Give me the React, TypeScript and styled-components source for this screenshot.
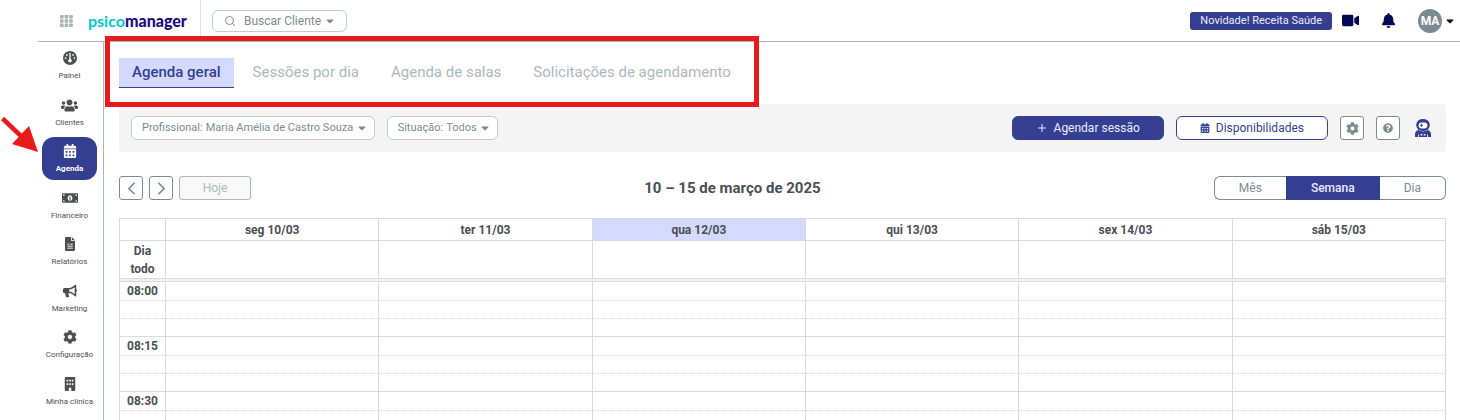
import React from "react";
import styled, { createGlobalStyle, css } from "styled-components";
import {
  FaUsers,
  FaCalendarAlt,
  FaMoneyBillAlt,
  FaBullhorn,
  FaCog,
  FaVideo,
  FaBell,
  FaCaretDown,
  FaQuestionCircle,
} from "react-icons/fa";
import { FaGauge, FaBuilding } from "react-icons/fa6";
import { ChevronLeft, ChevronRight, Plus, Search } from "lucide-react";

const c = {
  primary: "#343f92",
  navy: "#020a52",
  soft: "#d4daff",
  ink: "#4a5052",
  gray: "#7c8b93",
  mute: "#adb8be",
  line: "#d9dadb",
  red: "#e81b1c",
};

const GlobalStyle = createGlobalStyle`
  *, *::before, *::after { box-sizing: border-box; }
  body {
    margin: 0;
    background: #fff;
    color: ${c.ink};
    font-family: Roboto, "Liberation Sans", sans-serif;
    font-size: 12px;
    line-height: 18px;
  }
  button, select { font: inherit; color: inherit; margin: 0; cursor: pointer; }
  a { color: inherit; text-decoration: none; }
  svg { display: block; flex: none; }
`;

const Page = styled.div`
  position: relative;
  display: flex;
  flex-direction: column;
  height: 100vh;
  padding-left: 38px;
  overflow: hidden;
`;

const Header = styled.header`
  display: flex;
  align-items: center;
  flex: none;
  height: 42px;
  border-bottom: 1px solid #a9b5ba;
`;

const PlainButton = styled.button`
  display: flex;
  align-items: center;
  justify-content: center;
  padding: 0;
  border: 0;
  background: none;
`;

const Brand = styled.div`
  display: flex;
  align-items: center;
  align-self: stretch;
  gap: 15px;
  width: 163px;
  padding-left: 22px;
  border-right: 1px solid #dfe3e5;
`;

const Logo = styled.a`
  font-family: Lato, sans-serif;
  font-size: 16px;
  font-weight: 700;
  line-height: 20px;
  color: #00c8d4;
  strong {
    font-weight: 900;
    color: #200a80;
  }
`;

const SelectBox = styled.div`
  display: flex;
  align-items: center;
  height: 24px;
  padding: 0 6px 0 10px;
  border: 1px solid #c4cbce;
  border-radius: 6px;
  background: #fff;
  color: ${c.gray};
  font-size: 11px;
  label {
    padding-right: 3px;
  }
  select {
    appearance: none;
    padding: 0;
    border: 0;
    background: none;
  }
`;

const SearchBox = styled(SelectBox)`
  height: 22px;
  margin-left: 11px;
  padding: 0 10px 0 11px;
  font-size: 12px;
  label {
    padding-right: 8px;
  }
`;

const Caret = styled(FaCaretDown)`
  width: 12px;
  height: 12px;
  margin-left: 2px;
  pointer-events: none;
`;

const HeaderActions = styled.div`
  display: flex;
  align-items: center;
  margin-left: auto;
  padding-right: 4px;
  color: ${c.navy};
`;

const News = styled.button`
  height: 18px;
  margin-right: 10px;
  padding: 0 10px;
  border: 0;
  border-radius: 3px;
  background: ${c.primary};
  color: #e8eaff;
  font-size: 11px;
  line-height: 16px;
`;

const Alerts = styled.div`
  display: flex;
  align-items: center;
  gap: 22px;
`;

const Account = styled(PlainButton)`
  gap: 2px;
  color: #000;
`;

const Avatar = styled.span`
  display: grid;
  place-items: center;
  width: 24px;
  height: 24px;
  border-radius: 50%;
  background: #7c8b93;
  color: #fff;
  font-weight: 700;
  font-size: 12px;
`;

const Body = styled.div`
  display: flex;
  flex: 1;
  min-height: 0;
`;

const Sidebar = styled.nav`
  flex: none;
  width: 66px;
  padding: 2px 0 0 4px;
  border-right: 1px solid #a9b5ba;
`;

const MenuList = styled.ul`
  display: flex;
  flex-direction: column;
  justify-content: space-between;
  height: 369px;
  margin: 0;
  padding: 0;
  list-style: none;
`;

const MenuLink = styled.a<{ $active?: boolean }>`
  display: flex;
  flex-direction: column;
  align-items: center;
  gap: 5px;
  width: 55px;
  height: 43px;
  padding-top: 6px;
  border-radius: 12px;
  font-size: 8px;
  line-height: 10px;
  white-space: nowrap;
  ${(p) =>
    p.$active &&
    css`
      background: ${c.primary};
      color: #fff;
      font-weight: 700;
    `}
`;

const MenuIcon = styled.span`
  display: grid;
  place-items: center;
  height: 16px;
`;

const Main = styled.main`
  flex: 1;
  min-width: 0;
  padding: 16px 14px 0 15px;
`;

const Tabs = styled.nav`
  display: flex;
  gap: 6px;
`;

const Tab = styled.a<{ $active?: boolean }>`
  height: 30px;
  padding: 0 13px;
  border-bottom: 1px solid transparent;
  color: ${c.mute};
  font-size: 15px;
  line-height: 28px;
  ${(p) =>
    p.$active &&
    css`
      border-color: ${c.primary};
      background: ${c.soft};
      color: ${c.primary};
      font-weight: 500;
    `}
`;

const Toolbar = styled.div`
  display: flex;
  align-items: center;
  gap: 12px;
  height: 48px;
  margin-top: 16px;
  padding: 0 12px;
  border-radius: 3px;
  background: #f4f4f4;
`;

const Spacer = styled.span`
  flex: 1;
`;

const Action = styled.button<{ $filled?: boolean }>`
  display: flex;
  align-items: center;
  justify-content: center;
  gap: 6px;
  height: 24px;
  padding: 0 23px;
  border: 1px solid ${c.primary};
  border-radius: 6px;
  background: ${(p) => (p.$filled ? c.primary : "#fff")};
  color: ${(p) => (p.$filled ? "#e8eaff" : c.primary)};
  font-size: 12px;
`;

const SquareButton = styled(PlainButton)`
  width: 24px;
  height: 24px;
  border: 1px solid ${c.gray};
  border-radius: 3px;
  background: #fff;
  color: ${c.gray};
`;

const AssistantButton = styled(PlainButton)`
  width: 22px;
  color: ${c.primary};
`;

const CalendarBar = styled.div`
  display: flex;
  align-items: center;
  justify-content: space-between;
  margin: 24px 0 18px;
`;

const Pager = styled.div`
  display: flex;
  gap: 6px;
`;

const TodayButton = styled.button`
  width: 72px;
  height: 24px;
  border: 1px solid ${c.mute};
  border-radius: 3px;
  background: #f8f8f8;
  color: ${c.mute};
  font-size: 12px;
`;

const Period = styled.h1`
  margin: 0;
  font-size: 15px;
  font-weight: 700;
  line-height: 24px;
`;

const Views = styled.div`
  display: flex;
`;

const ViewButton = styled.button<{ $active?: boolean }>`
  height: 24px;
  padding: 0 24px;
  border: 1px solid ${c.gray};
  background: #fff;
  color: ${c.gray};
  font-size: 12px;
  &:first-child {
    border-radius: 6px 0 0 6px;
    border-right: 0;
  }
  &:last-child {
    border-radius: 0 6px 6px 0;
    border-left: 0;
  }
  ${(p) =>
    p.$active &&
    css`
      border-color: ${c.primary};
      background: ${c.primary};
      color: #e8eaff;
      font-weight: 500;
    `}
`;

const Schedule = styled.table`
  width: 100%;
  border-collapse: collapse;
  table-layout: fixed;
  th,
  td {
    padding: 0;
    border: 1px solid ${c.line};
    font-weight: 700;
    text-align: center;
  }
`;

const TimeCol = styled.col`
  width: 46px;
`;

const DayHead = styled.th<{ $today?: boolean }>`
  height: 22px;
  background: ${(p) => (p.$today ? c.soft : "#fff")};
`;

const AllDayHead = styled.th`
  height: 38px;
  && {
    padding: 0 6px;
  }
`;

const DividerCell = styled.td`
  height: 3px;
  background: #f0f0f0;
`;

const SlotRow = styled.tr<{ $first?: boolean; $last?: boolean }>`
  height: ${(p) => (p.$first ? "19px" : "18px")};
  th {
    line-height: 18px;
  }
  && > * {
    border-top-style: ${(p) => (p.$first ? "solid" : "dotted")};
    border-bottom-style: ${(p) => (p.$last ? "solid" : "dotted")};
  }
`;

const Highlight = styled.div`
  position: absolute;
  top: 36px;
  left: 105px;
  width: 654px;
  height: 71px;
  border: 5px solid ${c.red};
  pointer-events: none;
`;

const Pointer = styled.svg`
  position: absolute;
  top: 114px;
  left: 0;
  pointer-events: none;
`;

const AppsIcon = () => (
  <svg width="13" height="12" viewBox="0 0 13 12" fill="#a9b2b7" aria-hidden="true">
    {[0, 4.3, 8.6].map((y) =>
      [0, 4.6, 9.2].map((x) => <rect key={`${x}-${y}`} x={x} y={y} width="3.6" height="3.4" rx="0.6" />),
    )}
  </svg>
);

const AssistantIcon = () => (
  <svg width="18" height="20" viewBox="0 0 18 20" aria-hidden="true">
    <rect x="2.200" y="1" width="13.600" height="12" rx="6" fill="currentColor" />
    <rect x="4.600" y="4.400" width="8.800" height="6.200" rx="3" fill="#fff" />
    <path d="M6 7.300h3M7.500 5.800v3" stroke="currentColor" strokeWidth="1" />
    <path d="M1 19v-2.500q0-3.500 3-4.500 5 2.800 10 0 3 1 3 4.500V19z" fill="currentColor" />
    <path d="M4.500 16.500V19M13.500 16.500V19" stroke="#fff" strokeWidth="0.800" />
    <path d="M6.600 16.800h1.600M9.800 16.800h1.600" stroke="#fff" strokeWidth="1.600" />
  </svg>
);

const ReportIcon = ({ size }: { size: number }) => (
  <svg width={size} height={size} viewBox="0 0 14 14" aria-hidden="true">
    <path d="M3.200 0H8v3.200c0 .5.400.8.800.8H12v8.800c0 .7-.5 1.200-1.200 1.200H3.200C2.500 14 2 13.500 2 12.800V1.200C2 .5 2.500 0 3.200 0z" fill="currentColor" />
    <path d="M8.800.1 11.900 3.200H8.800z" fill="currentColor" />
    <path d="M4.300 7.200h2M7.200 7.200h2.500M4.300 9.200h5.400M4.300 11.200h5.400" stroke="#fff" strokeWidth="0.900" />
  </svg>
);

const menu = [
  { label: "Painel", Icon: FaGauge, size: 14 },
  { label: "Clientes", Icon: FaUsers, size: 17 },
  { label: "Agenda", Icon: FaCalendarAlt, size: 14, active: true },
  { label: "Financeiro", Icon: FaMoneyBillAlt, size: 16 },
  { label: "Relatórios", Icon: ReportIcon, size: 14 },
  { label: "Marketing", Icon: FaBullhorn, size: 14 },
  { label: "Configuração", Icon: FaCog, size: 14 },
  { label: "Minha clínica", Icon: FaBuilding, size: 14 },
];

const tabs = ["Agenda geral", "Sessões por dia", "Agenda de salas", "Solicitações de agendamento"];
const days = ["seg 10/03", "ter 11/03", "qua 12/03", "qui 13/03", "sex 14/03", "sáb 15/03"];
const today = "qua 12/03";
const hours = ["08:00", "08:15", "08:30"];

export default function App() {
  return (
    <>
      <GlobalStyle />
      <Page>
        <Header>
          <Brand>
            <PlainButton aria-label="Aplicativos">
              <AppsIcon />
            </PlainButton>
            <Logo href="#">
              psico<strong>manager</strong>
            </Logo>
          </Brand>
          <SearchBox>
            <label htmlFor="cliente" aria-label="Cliente">
              <Search size={12} />
            </label>
            <select id="cliente">
              <option>Buscar Cliente</option>
            </select>
            <Caret />
          </SearchBox>
          <HeaderActions>
            <News>Novidade! Receita Saúde</News>
            <Alerts>
              <PlainButton aria-label="Vídeo">
                <FaVideo size={17} />
              </PlainButton>
              <PlainButton aria-label="Notificações">
                <FaBell size={15} />
              </PlainButton>
              <Account aria-label="Conta">
                <Avatar>MA</Avatar>
                <FaCaretDown size={12} />
              </Account>
            </Alerts>
          </HeaderActions>
        </Header>
        <Body>
          <Sidebar>
            <MenuList>
              {menu.map(({ label, Icon, size, active }) => (
                <li key={label}>
                  <MenuLink href="#" $active={active}>
                    <MenuIcon>
                      <Icon size={size} />
                    </MenuIcon>
                    {label}
                  </MenuLink>
                </li>
              ))}
            </MenuList>
          </Sidebar>
          <Main>
            <Tabs>
              {tabs.map((t, i) => (
                <Tab key={t} href="#" $active={i === 0}>
                  {t}
                </Tab>
              ))}
            </Tabs>
            <Toolbar>
              <SelectBox>
                <label htmlFor="profissional">Profissional:</label>
                <select id="profissional">
                  <option>Maria Amélia de Castro Souza</option>
                </select>
                <Caret />
              </SelectBox>
              <SelectBox>
                <label htmlFor="situacao">Situação:</label>
                <select id="situacao">
                  <option>Todos</option>
                </select>
                <Caret />
              </SelectBox>
              <Spacer />
              <Action $filled>
                <Plus size={12} />
                Agendar sessão
              </Action>
              <Action>
                <FaCalendarAlt size={10} />
                Disponibilidades
              </Action>
              <SquareButton aria-label="Configurações">
                <FaCog size={13} />
              </SquareButton>
              <SquareButton aria-label="Ajuda">
                <FaQuestionCircle size={10} />
              </SquareButton>
              <AssistantButton aria-label="Assistente">
                <AssistantIcon />
              </AssistantButton>
            </Toolbar>
            <CalendarBar>
              <Pager>
                <SquareButton aria-label="Anterior">
                  <ChevronLeft size={21} />
                </SquareButton>
                <SquareButton aria-label="Próximo">
                  <ChevronRight size={21} />
                </SquareButton>
                <TodayButton disabled>Hoje</TodayButton>
              </Pager>
              <Period>10 – 15 de março de 2025</Period>
              <Views>
                <ViewButton>Mês</ViewButton>
                <ViewButton $active aria-pressed="true">
                  Semana
                </ViewButton>
                <ViewButton>Dia</ViewButton>
              </Views>
            </CalendarBar>
            <Schedule>
              <colgroup>
                <TimeCol />
                {days.map((d) => (
                  <col key={d} />
                ))}
              </colgroup>
              <thead>
                <tr>
                  <td />
                  {days.map((d) => (
                    <DayHead key={d} scope="col" $today={d === today}>
                      {d}
                    </DayHead>
                  ))}
                </tr>
              </thead>
              <tbody>
                <tr>
                  <AllDayHead scope="row">Dia todo</AllDayHead>
                  {days.map((d) => (
                    <td key={d} />
                  ))}
                </tr>
                <tr>
                  <DividerCell colSpan={7} />
                </tr>
                {hours.map((h) => (
                  <React.Fragment key={h}>
                    <SlotRow $first>
                      <th scope="row">{h}</th>
                      {days.map((d) => (
                        <td key={d} />
                      ))}
                    </SlotRow>
                    {[1, 2].map((n) => (
                      <SlotRow key={n} $last={n === 2}>
                        <td />
                        {days.map((d) => (
                          <td key={d} />
                        ))}
                      </SlotRow>
                    ))}
                  </React.Fragment>
                ))}
              </tbody>
            </Schedule>
          </Main>
        </Body>
        <Highlight />
        <Pointer width="40" height="40" viewBox="0 0 40 40" fill={c.red} aria-hidden="true">
          <path d="M2.500 4.500 21 22" stroke={c.red} strokeWidth="4.500" strokeLinecap="butt" />
          <path d="M38 38 12 30 29 12z" />
        </Pointer>
      </Page>
    </>
  );
}
